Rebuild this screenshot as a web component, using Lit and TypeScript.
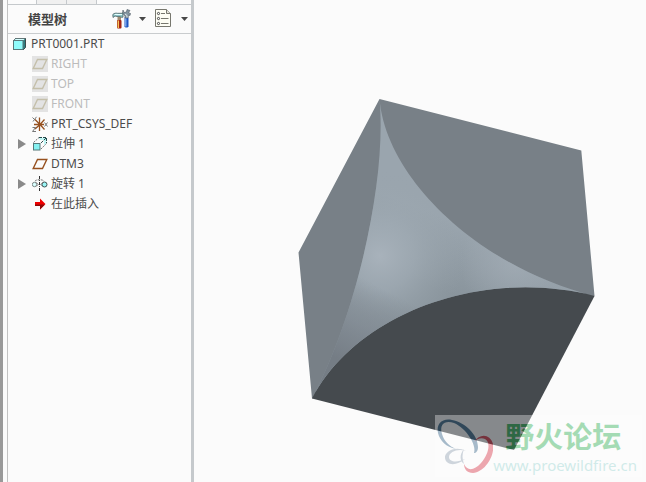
import { LitElement, html, svg, css, nothing } from "lit";
import { customElement, state } from "lit/decorators.js";
import { classMap } from "lit/directives/class-map.js";

type IconName = "part" | "plane" | "csys" | "extrude" | "revolve" | "insert";

interface TreeNode {
  label: string;
  icon: IconName;
  hidden?: boolean;
  expandable?: boolean;
}

const NODES: TreeNode[] = [
  { label: "RIGHT", icon: "plane", hidden: true },
  { label: "TOP", icon: "plane", hidden: true },
  { label: "FRONT", icon: "plane", hidden: true },
  { label: "PRT_CSYS_DEF", icon: "csys" },
  { label: "拉伸 1", icon: "extrude", expandable: true },
  { label: "DTM3", icon: "plane" },
  { label: "旋转 1", icon: "revolve", expandable: true },
  { label: "在此插入", icon: "insert" },
];

const ICONS = {
  part: svg`
    <path d="M1.5 4.5 L3.5 2.5 H13.5 V11.5 L11 14" fill="#2f7f80" stroke="#3c4a4c"/>
    <path d="M2 4 L4 2.8 H13 L11 4.6 Z" fill="#d8ffff"/>
    <rect x="1.5" y="4.5" width="9.5" height="9" fill="#8ffbfb" stroke="#56777a"/>`,
  plane: svg`
    <path d="M5.5 3.5 H14.8 L10.5 12.5 H1.2 Z" fill="none" stroke="currentColor" stroke-width="1.4"/>`,
  csys: svg`
    <path d="M7.5 1.5 V15 M3 3.5 L8 8.5 L12.5 3.5 M3 13 L8 8.5 L12.5 13.5 M2 8.5 H12" fill="none" stroke="#96501e" stroke-width="1.3"/>
    <path d="M.5 1.5 L2.5 3.5 M4.5 .8 L1 5.5 M12.5 6.5 L15.5 10.5 M15.5 6.5 L12.5 10.5 M.5 11.5 H3.5 L.5 15.5 H4" fill="none" stroke="#777"/>`,
  extrude: svg`
    <path d="M1.5 6.5 L7 1.5 M9 13 L14.5 7.5" stroke="#777" stroke-dasharray="2 1"/>
    <path d="M7 2 H14 V8 L12 9 V4 H8 Z" fill="#bff6f4"/>
    <path d="M7 1.5 H14.5 V7 M14 2 L9 7" fill="none" stroke="#244b4c" stroke-dasharray="3 1"/>
    <rect x="1.5" y="7.5" width="6.5" height="6.5" fill="#85f1f1" stroke="#557879"/>`,
  revolve: svg`
    <path d="M7.5 0 V15" stroke="#333" stroke-dasharray="3 1 1 1"/>
    <path d="M3 5 C4 3.3 11 3.3 12 5" fill="none" stroke="#777" stroke-dasharray="2 1"/>
    <circle cx="2.5" cy="8.5" r="2.2" fill="#d9ffff" stroke="#7a8585"/>
    <circle cx="12.5" cy="8.5" r="2.5" fill="#9af5f5" stroke="#3f5252"/>
    <path d="M3.5 6 L6.5 8.5 L4.5 10 M11.5 6 L8.5 8.5 L10.5 10" fill="none" stroke="#777" stroke-width=".8"/>`,
  insert: svg`
    <path d="M3 6 H8 V2.5 L13.5 8 L8 13.5 V10 H3 Z" fill="#f00000"/>
    <path d="M3 8.5 H13 L8 13.5 V10 H3 Z" fill="#8d0808"/>`,
};

const icon = (name: IconName) =>
  html`<svg class="icon" viewBox="0 0 16 16" aria-hidden="true">${ICONS[name]}</svg>`;

@customElement("model-tree")
export class ModelTree extends LitElement {
  @state() private open = new Set<string>();

  static styles = css`
    :host {
      display: flex;
      flex-direction: column;
      color: #4b4b4b;
      font: 12px/20px "Noto Sans", "Noto Sans CJK SC", sans-serif;
    }
    .tabs {
      display: flex;
      height: 4px;
      padding-left: 28px;
      border-bottom: 1px solid #c5c9cc;
    }
    .tab {
      width: 29px;
      background: #f0f0f0;
      border-left: 1px solid #c5c9cc;
    }
    .tab:last-child {
      border-right: 1px solid #c5c9cc;
    }
    .header {
      display: flex;
      align-items: center;
      height: 28px;
      padding: 0 3px 0 20px;
      border-bottom: 1px solid #c9ccce;
    }
    .title {
      flex: 1;
      margin: 0;
      font: bold 13px/20px "Noto Sans CJK SC", sans-serif;
      color: #444;
    }
    .tool {
      display: flex;
      align-items: center;
      gap: 7px;
      margin-left: 8px;
      padding: 0;
      border: 0;
      background: none;
    }
    .glyph {
      width: 20px;
      height: 20px;
    }
    .drop {
      width: 7px;
      height: 4px;
      fill: #484848;
    }
    .tree {
      list-style: none;
      margin: 0;
      padding: 0;
    }
    .row {
      display: flex;
      align-items: center;
      height: 20px;
      gap: 3px;
      padding-left: 24px;
      white-space: nowrap;
    }
    .root {
      padding-left: 4px;
    }
    .expandable {
      padding-left: 10px;
    }
    .expander {
      width: 11px;
      height: 16px;
      padding: 0;
      border: 0;
      background: none;
      display: flex;
      align-items: center;
    }
    .arrow {
      width: 8px;
      height: 10px;
      fill: #8a8a8a;
    }
    .opened .arrow {
      transform: rotate(90deg);
    }
    .icon {
      width: 16px;
      height: 16px;
      flex: none;
      color: #96501e;
    }
    .hidden {
      color: #bcbcbc;
    }
    .hidden .icon {
      background: #e3e3e3;
      color: #c4bfaa;
    }
  `;

  private toggle(label: string) {
    const next = new Set(this.open);
    if (!next.delete(label)) next.add(label);
    this.open = next;
  }

  private drop() {
    return html`<svg class="drop" viewBox="0 0 7 4" aria-hidden="true"><path d="M0 0 H7 L3.5 4 Z" /></svg>`;
  }

  render() {
    return html`
      <div class="tabs"><span class="tab"></span><span class="tab"></span></div>
      <div class="header">
        <h2 class="title">模型树</h2>
        <button class="tool" aria-label="设置">
          <svg class="glyph" viewBox="0 0 20 20" aria-hidden="true">
            <path d="M12.5 8.5 H16.5 V17.5 L15.5 18.5 H13.5 L12.5 17.5 Z" fill="#1f55c0" />
            <path d="M13.8 9 V17.5" stroke="#8fb8f4" stroke-width="1.2" />
            <path d="M11 1 L12 3.5 L14.5 3 L15 .5 L18 1.5 L16.5 3.5 L18.5 4.5 L18 6.5 L16.5 6 L16 9 H13 V7 L10.5 4 Z" fill="#8496a2" stroke="#4c5862" stroke-width=".6" />
            <path d="M13 5 L15 6.5 V8.5" stroke="#e3ebf0" fill="none" />
            <rect x="5.5" y="8" width="3.5" height="4" fill="#a08a70" />
            <rect x="5" y="11" width="4.5" height="8.5" rx="1" fill="#a62414" />
            <path d="M6.3 11.5 V19" stroke="#f5c45a" stroke-width="1.4" />
            <path d="M.8 5.5 C2 4 4.5 4 5.5 4.3 H11 V8.2 H9 L8 7.5 H5 L3 7 L1 8.5 Z" fill="#8cc4c6" stroke="#4b6366" stroke-width=".8" />
            <path d="M2.5 5.5 H10" stroke="#e4ffff" />
          </svg>
          ${this.drop()}
        </button>
        <button class="tool" aria-label="显示">
          <svg class="glyph" viewBox="0 0 20 20" aria-hidden="true">
            <path d="M1.5 .5 H12.5 L16.5 4.5 V17.5 H1.5 Z" fill="#fdfdf4" stroke="#77776e" />
            <path d="M12.5 .5 V4.5 H16.5" fill="#e4e4da" stroke="#77776e" />
            <g fill="#fff" stroke="#444">
              <circle cx="4.5" cy="4.5" r="1.1" /><circle cx="4.5" cy="9.5" r="1.1" /><circle cx="4.5" cy="14.5" r="1.1" />
            </g>
            <path d="M7 4.5 H11 M7 9.5 H14.5 M7 14.5 H14.5" stroke="#77776e" />
          </svg>
          ${this.drop()}
        </button>
      </div>
      <ul class="tree">
        <li class="row root">${icon("part")}<span>PRT0001.PRT</span></li>
        ${NODES.map(
          (n) => html`<li
            class=${classMap({
              row: true,
              hidden: !!n.hidden,
              expandable: !!n.expandable,
              opened: this.open.has(n.label),
            })}
          >
            ${n.expandable
              ? html`<button class="expander" aria-label=${"展开 " + n.label} @click=${() => this.toggle(n.label)}>
                  <svg class="arrow" viewBox="0 0 8 10" aria-hidden="true"><path d="M0 0 L8 5 L0 10 Z" /></svg>
                </button>`
              : nothing}${icon(n.icon)}<span>${n.label}</span>
          </li>`
        )}
      </ul>
    `;
  }
}

@customElement("forum-mark")
export class ForumMark extends LitElement {
  static styles = css`
    :host {
      display: flex;
      align-items: flex-start;
      height: 62px;
      background: #fff;
      opacity: 0.35;
    }
    .logo {
      width: 58px;
      height: 62px;
    }
    .words {
      display: flex;
      flex-direction: column;
      padding-right: 5px;
    }
    .name {
      padding-left: 12px;
      font: 700 29px/40px "Noto Sans CJK SC", sans-serif;
      color: #05a233;
    }
    .site {
      font: 15px/20px "Noto Sans", sans-serif;
      color: #83cdc8;
      text-decoration: none;
    }
  `;

  render() {
    return html`
      <svg class="logo" viewBox="0 0 58 62" aria-hidden="true">
        <path
          d="M3 18 C1 8 8 3 17 5 C30 7 43 20 43 32 C43 36 41 38 39 38 C42 30 31 13 19 8 C10 5 4 9 7 19 C9 26 14 31 21 34 C11 32 5 26 3 18 Z"
          fill="#0b4470" />
        <path
          d="M39 27 C45 18 55 19 58 29 C60 41 50 57 38 58 C32 58 29 54 29 49 C32 56 39 56 46 48 C54 39 56 27 50 24 C46 22 42 24 39 27 Z"
          fill="#d20a20" />
        <path
          d="M31 36 C20 30 9 37 10 43 C11 51 22 51 30 44 C22 48 14 47 14 42 C14 37 23 33 31 36 Z M29 34 C24 40 25 46 29 49 C27 44 27 39 29 34 Z"
          fill="#7c8fa4" />
      </svg>
      <div class="words">
        <span class="name">野火论坛</span>
        <a class="site" href="#">www.proewildfire.cn</a>
      </div>
    `;
  }
}

@customElement("app-root")
export class AppRoot extends LitElement {
  static styles = css`
    :host {
      display: grid;
      grid-template-columns: 3px 4px 187px 1fr;
      min-height: 100vh;
      background: #fbfbfb;
    }
    .edge {
      background: #999;
    }
    .panel {
      box-sizing: border-box;
      border-left: 1px solid #c2c2c2;
      border-right: 3px solid #c5c9cc;
    }
    .view {
      position: relative;
      min-width: 0;
    }
    .model {
      display: block;
      width: 100%;
    }
    .mark {
      position: absolute;
      right: 4px;
      bottom: 5px;
    }
  `;

  render() {
    return html`
      <div class="edge"></div>
      <div></div>
      <model-tree class="panel"></model-tree>
      <main class="view">
        <svg class="model" viewBox="194 0 452 482" role="img" aria-label="PRT0001">
          <defs>
            <linearGradient id="base" gradientUnits="userSpaceOnUse" x1="490" y1="235" x2="465" y2="300">
              <stop offset="0" stop-color="#9aa5ae" />
              <stop offset="1" stop-color="#89949c" />
            </linearGradient>
            <radialGradient id="glow" gradientUnits="userSpaceOnUse" cx="380" cy="256" r="85">
              <stop offset="0" stop-color="#a8b2bb" />
              <stop offset=".4" stop-color="#a1acb5" stop-opacity=".75" />
              <stop offset="1" stop-color="#98a3ab" stop-opacity="0" />
            </radialGradient>
            <linearGradient id="shade" gradientUnits="userSpaceOnUse" x1="374" y1="284" x2="336" y2="358">
              <stop offset="0" stop-color="#757d85" stop-opacity="0" />
              <stop offset=".5" stop-color="#7d858e" stop-opacity=".55" />
              <stop offset="1" stop-color="#757d85" />
            </linearGradient>
            <radialGradient id="tip" gradientUnits="userSpaceOnUse" cx="515" cy="262" r="55">
              <stop offset="0" stop-color="#a1abb4" stop-opacity=".8" />
              <stop offset="1" stop-color="#a1abb4" stop-opacity="0" />
            </radialGradient>
            <path
              id="pocket"
              d="M379.5 99 C386.5 181 483 269 594.5 296 C483 267 356 313 312 398.5 C357 314 387 179 379.5 99 Z" />
          </defs>
          <path d="M379.5 99 L581.3 150.5 L594.5 296 L480 330 L312 398.5 L298.5 252.5 Z" fill="#788087" />
          <path d="M312 398.5 C356 313 483 267 594.5 296 L514 450 Z" fill="#454a4e" />
          <use href="#pocket" fill="url(#base)" />
          <use href="#pocket" fill="url(#tip)" />
          <use href="#pocket" fill="url(#glow)" />
          <use href="#pocket" fill="url(#shade)" />
        </svg>
        <forum-mark class="mark"></forum-mark>
      </main>
    `;
  }
}
